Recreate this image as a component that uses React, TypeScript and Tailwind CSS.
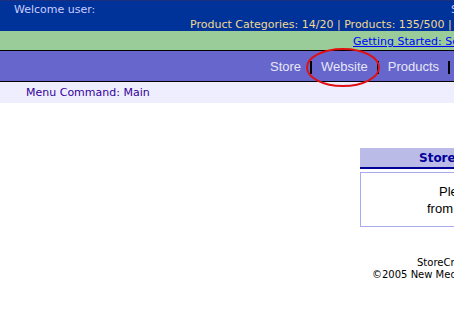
export default function App() {
  return (
    <div className="w-[454px] h-[323px] overflow-hidden bg-white font-['DejaVu_Sans',sans-serif]">
      <div className="w-[640px]">
        {/* Top status bar */}
        <div className="h-[31px] bg-[#003399] border-t border-[#1f2f80] pt-[1px] text-[11px]">
          <div className="flex h-[15px] leading-[15px] text-[#ccccff] whitespace-nowrap">
            <span className="w-[451px] pl-[14px]">Welcome user:</span>
            <span>Store: Main Store</span>
          </div>
          <div className="h-[14px] leading-[15px] pl-[190px] text-[#f0d890] whitespace-nowrap">
            Product Categories: 14/20 | Products: 135/500 | Orders: 12
          </div>
        </div>

        {/* Getting started bar */}
        <div className="h-[20px] overflow-hidden bg-[#99cc99] border-b border-black text-[11px] leading-[22px] pl-[353px] whitespace-nowrap">
          <a href="#" className="text-[#0000ff] underline">
            Getting Started: Setup Wizard
          </a>
        </div>

        {/* Main nav */}
        <div className="relative h-[31px] bg-[#6666cc] border-b border-black flex items-center pt-[2px] pl-[270px] font-['Liberation_Sans',Arial,sans-serif] text-[13px] text-[#e6e6f5] whitespace-nowrap">
          <span>Store</span>
          <span className="mx-[9px] inline-block w-[2px] h-[13px] bg-black" />
          <span>Website</span>
          <span className="mx-[9px] inline-block w-[2px] h-[13px] bg-black" />
          <span>Products</span>
          <span className="mx-[9px] inline-block w-[2px] h-[13px] bg-black" />
          <span>Orders</span>
          <svg className="absolute left-[304px] top-[-4px]" width="78" height="41" viewBox="0 0 78 41">
            <ellipse cx="39" cy="20.5" rx="36" ry="18.5" fill="none" stroke="#e01010" strokeWidth="2" />
          </svg>
        </div>

        {/* Menu command */}
        <div className="h-[21px] bg-[#eeeeff] pl-[26px] text-[11px] leading-[22px] text-[#330099]">
          Menu Command: Main
        </div>

        {/* Content */}
        <div className="pl-[360px] pt-[45px]">
          <div className="w-[220px]">
            <div className="h-[21px] bg-[#bbbbe8] border-b-2 border-[#000099] pl-[59px] text-[12px] leading-[21px] font-bold text-[#000099]">
              Store Setup
            </div>
            <div className="mt-[3px] h-[55px] border border-[#aaaaee] pt-[10px] font-['Liberation_Sans',Arial,sans-serif] text-[13px] leading-[17px] text-black whitespace-nowrap">
              <div className="pl-[78px]">Please choose a task</div>
              <div className="pl-[66px]">from the menu above.</div>
            </div>
          </div>
        </div>

        {/* Footer */}
        <div className="pt-[30px] text-[10px] leading-[12px] text-black whitespace-nowrap">
          <div className="pl-[417px]">StoreCreator v2.0</div>
          <div className="pl-[372px]">©2005 New Media Solutions</div>
        </div>
      </div>
    </div>
  );
}
